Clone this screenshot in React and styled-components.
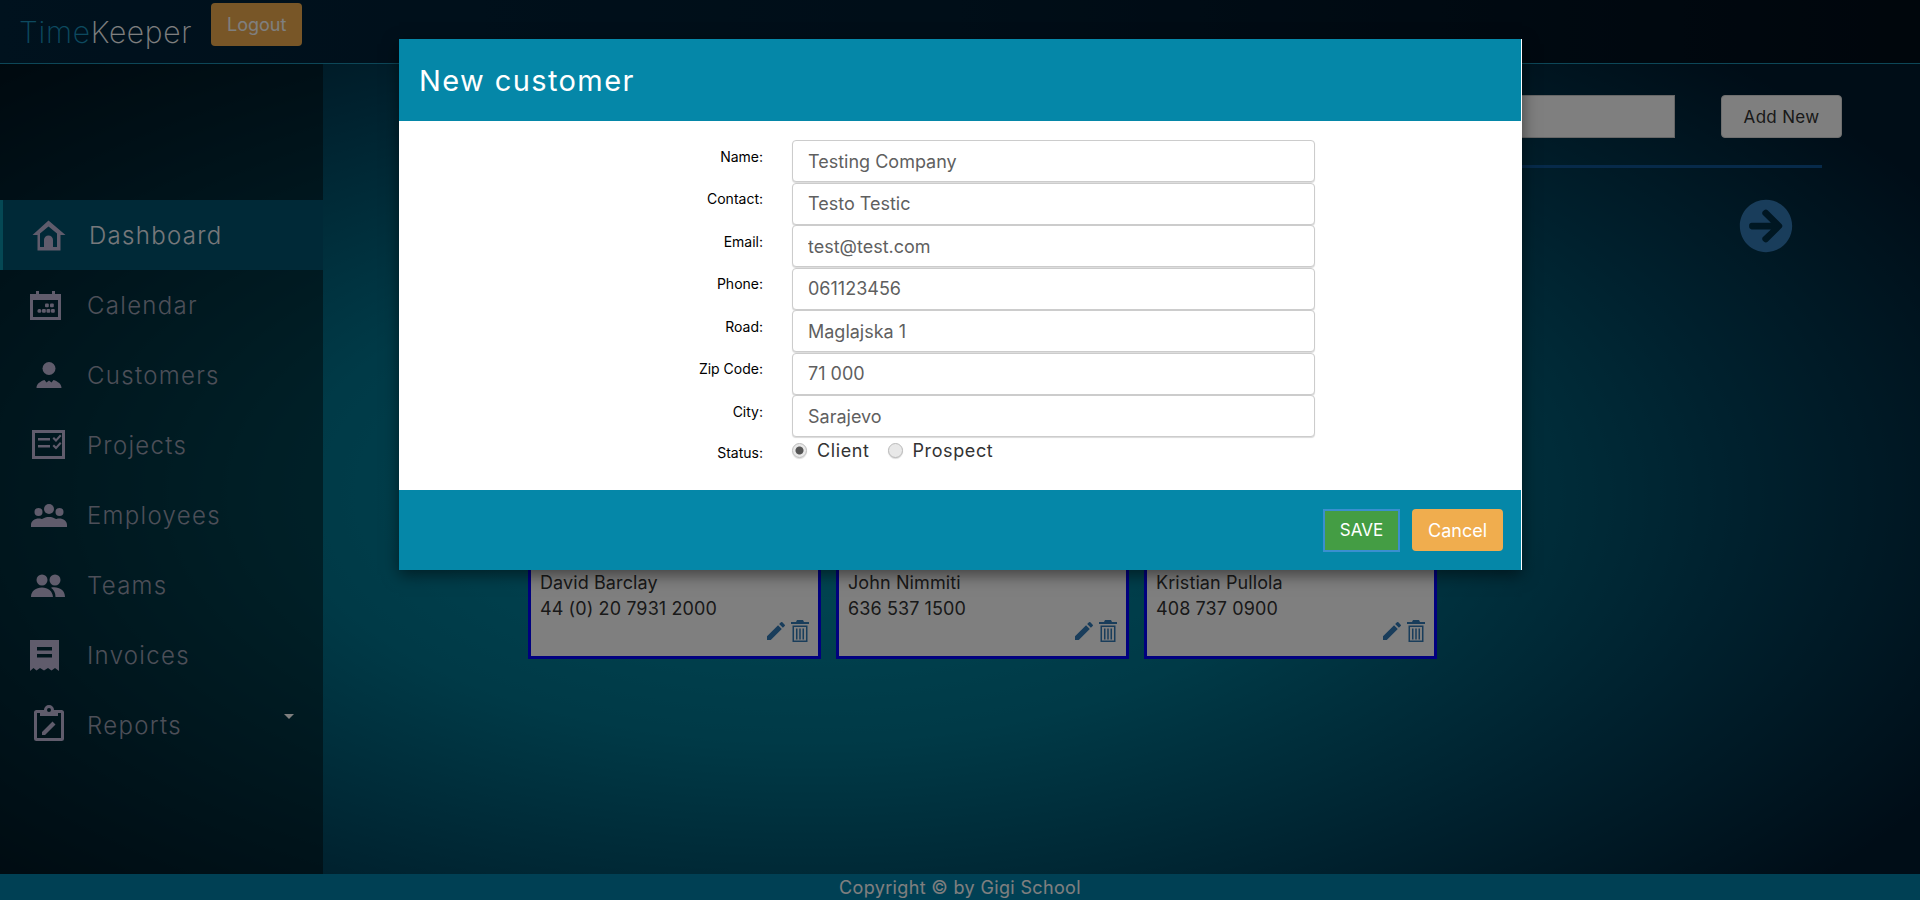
import React from 'react';
import styled, { createGlobalStyle } from 'styled-components';
import { FaArrowCircleRight } from 'react-icons/fa';
import { MdEdit } from 'react-icons/md';

const FONT = '"Inter", "Noto Sans", sans-serif';

const GlobalStyle = createGlobalStyle`
  html, body {
    margin: 0;
    height: 100%;
    overflow: hidden;
    font-family: ${FONT};
  }
  * {
    box-sizing: border-box;
  }
`;

const NAV = [
  {
    label: 'Dashboard',
    icon: (
      <path
        fillRule="evenodd"
        d="M18.5 5.5L2.5 20h5v15.500H30.500V20h5zM18.5 11.500L27 18.500V32h-4v-7a4.500 4.500 0 0 0-9 0v7h-4V18.500z"
      />
    )
  },
  {
    label: 'Calendar',
    icon: (
      <>
        <path
          fillRule="evenodd"
          d="M2 9h6V6h3v3h13V6h3v3h6v26H2zM5 15v17h25V15z"
        />
        <rect x="17" y="18.500" width="3.800" height="3.800" rx="1" />
        <rect x="22" y="18.500" width="3.800" height="3.800" rx="1" />
        <rect x="9.500" y="24" width="3.800" height="3.800" rx="1.500" />
        <rect x="14" y="24" width="3.800" height="3.800" rx="1" />
        <rect x="18.500" y="24" width="3.800" height="3.800" rx="1" />
        <rect x="23" y="24" width="3.800" height="3.800" rx="1" />
      </>
    )
  },
  {
    label: 'Customers',
    icon: (
      <>
        <circle cx="21" cy="13.500" r="6.500" />
        <path d="M8.500 33c0-4 3.500-6.500 8-8l2 2.500 2.500-2 2.500 2 2-2.500c4.500 1.500 8 4 8 8z" />
      </>
    )
  },
  {
    label: 'Projects',
    icon: (
      <>
        <path fillRule="evenodd" d="M4 5h33v29H4zM7 8v23h27V8z" />
        <rect x="10" y="13" width="12" height="2.500" />
        <rect x="10" y="20" width="12" height="2.500" />
        <path d="M24.500 13.500l1.500-1.500 2 2 4-4.500 1.500 1.500-5.500 6zM24.500 21l1.500-1.500 2 2 4-4.500 1.500 1.500-5.500 6z" />
      </>
    )
  },
  {
    label: 'Employees',
    icon: (
      <>
        <circle cx="21" cy="14" r="5" />
        <circle cx="10.500" cy="17" r="4" />
        <circle cx="31.500" cy="17" r="4" />
        <path d="M3 32v-2c0-4 3.500-6.500 8-6.500 1.500 0 2.500.3 3 .6 2-1.500 4.500-2.100 7-2.100s5 .6 7 2.100c.5-.3 1.500-.6 3-.6 4.500 0 8 2.500 8 6.500v2z" />
      </>
    )
  },
  {
    label: 'Teams',
    icon: (
      <>
        <circle cx="14" cy="15" r="5.500" />
        <circle cx="27" cy="15" r="5.500" />
        <path d="M3 32c0-6 5-9.500 11-9.500s10.500 3.500 11 9.500zM23 22.700c7-1.500 14 2 14 9.300h-9.500c0-4-1.500-7-4.500-9.300z" />
      </>
    )
  },
  {
    label: 'Invoices',
    icon: (
      <path
        fillRule="evenodd"
        d="M2 5h29v31l-4-3-3.500 2.500-3.500-2.500-4 2.500-4-2.500-3.500 2.500-3-2.500-3.500 3zM9 12v3.500h15V12zM9 19v3.500h15V19z"
      />
    )
  },
  {
    label: 'Reports',
    icon: (
      <path
        fillRule="evenodd"
        d="M6 7.500A2.500 2.500 0 0 1 8.500 5H16a5 5 0 0 1 10 0h7.500A2.500 2.500 0 0 1 36 7.500v26a2.500 2.500 0 0 1-2.500 2.500h-25A2.500 2.500 0 0 1 6 33.500zM9 8v25h24V8h-3v3H12V8zM19 5a2 2 0 0 0 4 0 2 2 0 0 0-4 0zM14 30v-3L24.500 16.500l3 3L17 30z"
      />
    ),
    caret: true
  }
];

const CARDS = [
  { name: 'David Barclay', phone: '44 (0) 20 7931 2000' },
  { name: 'John Nimmiti', phone: '636 537 1500' },
  { name: 'Kristian Pullola', phone: '408 737 0900' }
];

const FIELDS = [
  ['Name:', 'Testing Company'],
  ['Contact:', 'Testo Testic'],
  ['Email:', 'test@test.com'],
  ['Phone:', '061123456'],
  ['Road:', 'Maglajska 1'],
  ['Zip Code:', '71 000'],
  ['City:', 'Sarajevo']
];

const TrashIcon = () => (
  <svg width="18" height="22" viewBox="0 0 18 22" fill="currentColor">
    <path
      fillRule="evenodd"
      d="M6 0h6l1 2h5v2H0V2h5zM1.500 5.500h15V22h-15zM3 7v13.500h12V7zM5 8.500h1.500v11H5zM8.250 8.500h1.500v11h-1.500zM11.500 8.500H13v11h-1.500z"
    />
  </svg>
);

export default function App() {
  return (
    <Page>
      <GlobalStyle />
      <Header>
        <Logo>
          <span>Time</span>Keeper
        </Logo>
        <LogoutButton>Logout</LogoutButton>
      </Header>

      <Body>
        <Sidebar>
          <UserBlock />
          {NAV.map((item, i) => (
            <NavItem key={item.label} $active={i === 0}>
              <NavIcon viewBox="0 0 40 40" fill="currentColor">
                {item.icon}
              </NavIcon>
              <NavLabel>{item.label}</NavLabel>
              {item.caret && <Caret />}
            </NavItem>
          ))}
        </Sidebar>

        <Main>
          <Toolbar>
            <SearchInput />
            <AddButton>Add New</AddButton>
          </Toolbar>
          <Divider />
          <ArrowRow>
            <FaArrowCircleRight size={54} />
          </ArrowRow>
          <CardRow>
            {CARDS.map(card => (
              <Card key={card.name}>
                <CardLine>{card.name}</CardLine>
                <CardLine>{card.phone}</CardLine>
                <CardActions>
                  <MdEdit size={24} />
                  <TrashIcon />
                </CardActions>
              </Card>
            ))}
          </CardRow>
        </Main>
      </Body>

      <Footer>Copyright © by Gigi School</Footer>

      <Overlay>
        <Modal>
          <ModalHeader>New customer</ModalHeader>
          <ModalBody>
            {FIELDS.map(([label, value]) => (
              <FormRow key={label}>
                <FormLabel>{label}</FormLabel>
                <FormInput defaultValue={value} />
              </FormRow>
            ))}
            <StatusRow>
              <StatusLabel>Status:</StatusLabel>
              <RadioGroup>
                <Radio type="radio" name="status" defaultChecked />
                <RadioLabel>Client</RadioLabel>
                <Radio type="radio" name="status" />
                <RadioLabel>Prospect</RadioLabel>
              </RadioGroup>
            </StatusRow>
          </ModalBody>
          <ModalFooter>
            <SaveButton>SAVE</SaveButton>
            <CancelButton>Cancel</CancelButton>
          </ModalFooter>
        </Modal>
      </Overlay>
    </Page>
  );
}

const Page = styled.div`
  position: relative;
  width: 1920px;
  height: 900px;
  display: flex;
  flex-direction: column;
  overflow: hidden;
  background: radial-gradient(
    ellipse 1300px 620px at 42% 55%,
    #0092ac 0%,
    #00748e 40%,
    #00425c 72%,
    #001a2e 100%
  );
`;

const Header = styled.header`
  height: 64px;
  flex: none;
  display: flex;
  align-items: flex-start;
  padding-left: 19px;
  border-bottom: 1px solid #1a8fb0;
  background: linear-gradient(90deg, #00243c, #001c30 50%, #000c18);
`;

const Logo = styled.div`
  font-size: 30px;
  font-weight: 200;
  line-height: 36px;
  margin-top: 14px;
  letter-spacing: 0.7px;
  color: #fff;
  span {
    color: #1a94bf;
  }
`;

const LogoutButton = styled.button`
  width: 91px;
  height: 43px;
  margin: 3px 0 0 19px;
  border: none;
  border-radius: 4px;
  background: #f0ad4e;
  color: #fff;
  font: 400 18px ${FONT};
`;

const Body = styled.div`
  flex: 1;
  display: flex;
  min-height: 0;
`;

const Sidebar = styled.aside`
  width: 323px;
  flex: none;
  background: rgba(0, 0, 0, 0.45);
`;

const UserBlock = styled.div`
  height: 136px;
`;

const NavItem = styled.div`
  position: relative;
  height: 70px;
  display: flex;
  align-items: center;
  padding-left: ${p => (p.$active ? '27px' : '28px')};
  color: ${p => (p.$active ? '#eef0f6' : '#9a9eb0')};
  background: ${p => (p.$active ? '#00526e' : 'transparent')};
  border-left: ${p => (p.$active ? '3px solid #0a90a8' : 'none')};
`;

const NavIcon = styled.svg`
  width: 40px;
  height: 40px;
  flex: none;
  color: #c0b8d8;
`;

const NavLabel = styled.span`
  margin: 1px 0 0 19px;
  font-size: 24px;
  font-weight: 300;
  letter-spacing: 1.3px;
`;

const Caret = styled.span`
  position: absolute;
  left: 284px;
  top: 24px;
  border-style: solid;
  border-width: 5px 5px 0;
  border-color: #fff transparent transparent;
`;

const Main = styled.main`
  flex: 1;
  min-width: 0;
  padding-top: 31px;
`;

const Toolbar = styled.div`
  display: flex;
  justify-content: flex-end;
  padding-right: 78px;
`;

const SearchInput = styled.input`
  width: 500px;
  height: 43px;
  border: 1px solid #ccc;
  background: #fff;
`;

const AddButton = styled.button`
  width: 121px;
  height: 43px;
  margin-left: 46px;
  border: 1px solid #ddd;
  border-radius: 4px;
  background: #fff;
  color: #333;
  font: 400 17px ${FONT};
  letter-spacing: 0.3px;
`;

const Divider = styled.div`
  height: 3px;
  margin: 27px 98px 0 100px;
  background: #0f5494;
`;

const ArrowRow = styled.div`
  display: flex;
  justify-content: flex-end;
  margin-top: 31px;
  padding-right: 127px;
  color: #337ab7;
`;

const CardRow = styled.div`
  display: flex;
  gap: 15px;
  margin-top: 108px;
  padding-left: 205px;
`;

const Card = styled.div`
  position: relative;
  width: 293px;
  height: 298px;
  display: flex;
  flex-direction: column;
  justify-content: flex-end;
  padding: 0 9px 34px;
  border: 3px solid #0000ff;
  background: #fff;
  color: #333;
`;

const CardLine = styled.div`
  font-size: 18px;
  line-height: 26px;
  letter-spacing: 0.1px;
`;

const CardActions = styled.div`
  position: absolute;
  right: 9px;
  bottom: 13px;
  display: flex;
  align-items: center;
  gap: 3px;
  color: #337ab7;
`;

const Footer = styled.footer`
  height: 26px;
  flex: none;
  display: flex;
  align-items: center;
  justify-content: center;
  background: #0080a8;
  color: #fff;
  font-size: 18px;
  letter-spacing: 0.35px;
`;

const Overlay = styled.div`
  position: absolute;
  inset: 0;
  background: rgba(0, 0, 0, 0.5);
  padding: 39px 0 0 399px;
`;

const Modal = styled.div`
  width: 1123px;
  height: 531px;
  display: flex;
  flex-direction: column;
  background: #fff;
  border-right: 1px solid #fff;
  box-shadow: 0 5px 15px rgba(0, 0, 0, 0.5);
`;

const ModalHeader = styled.div`
  height: 82px;
  flex: none;
  display: flex;
  align-items: center;
  padding-left: 20px;
  background: #0587a8;
  color: #fff;
  font-size: 29px;
  letter-spacing: 1.4px;
`;

const ModalBody = styled.div`
  flex: 1;
  padding-top: 19px;
`;

const FormRow = styled.div`
  height: 42.5px;
  display: flex;
`;

const FormLabel = styled.label`
  width: 364px;
  margin: 7.5px 29px 0 0;
  text-align: right;
  font-size: 14px;
  font-weight: 400;
  color: #000;
`;

const StatusLabel = styled(FormLabel)`
  margin-top: 6px;
`;

const FormInput = styled.input`
  width: 523px;
  height: 42px;
  padding: 0 15px;
  border: 1px solid #ccc;
  border-radius: 4px;
  box-shadow: 0 1px 1px rgba(0, 0, 0, 0.15);
  color: #5f5f5f;
  font: 400 18px ${FONT};
`;

const StatusRow = styled.div`
  display: flex;
`;

const RadioGroup = styled.div`
  display: flex;
  align-items: center;
  height: 26px;
`;

const Radio = styled.input`
  appearance: none;
  width: 15px;
  height: 15px;
  margin: 0;
  border: 1px solid #bbb;
  border-radius: 50%;
  background: #e8e8e8;
  box-shadow: 0 1px 1px rgba(0, 0, 0, 0.15);
  &:checked {
    background: radial-gradient(circle, #555 0 3.5px, #e8e8e8 4.5px);
  }
`;

const RadioLabel = styled.span`
  margin: 0 18px 0 10px;
  font-size: 18px;
  letter-spacing: 0.6px;
  color: #333;
`;

const ModalFooter = styled.div`
  height: 80px;
  flex: none;
  display: flex;
  justify-content: flex-end;
  align-items: center;
  gap: 12px;
  padding-right: 18px;
  background: #0587a8;
`;

const SaveButton = styled.button`
  width: 77px;
  height: 43px;
  border: 2px solid #3a8fd0;
  background: #449d44;
  color: #fff;
  font: 400 17px ${FONT};
`;

const CancelButton = styled.button`
  width: 91px;
  height: 42px;
  border: none;
  border-radius: 4px;
  background: #f0ad4e;
  color: #fff;
  font: 400 18px ${FONT};
`;
